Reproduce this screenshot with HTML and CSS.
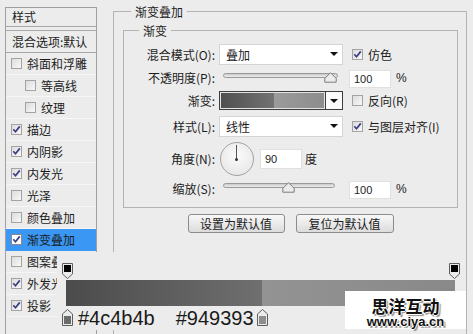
FILE: index.html
```html
<!DOCTYPE html>
<html lang="zh-CN">
<head>
<meta charset="utf-8">
<title>渐变叠加</title>
<link rel="stylesheet" href="styles.css">
</head>
<body>
<div class="dialog">
  <div class="style-list">
    <div class="list-head">样式</div>
    <div class="list-blend">混合选项:默认</div>
    <div class="item"><span class="cb"></span><span class="txt">斜面和浮雕</span></div>
    <div class="item sub"><span class="cb"></span><span class="txt">等高线</span></div>
    <div class="item sub"><span class="cb"></span><span class="txt">纹理</span></div>
    <div class="item"><span class="cb"><svg viewBox="0 0 11 11"><polyline points="2.3,5.3 4.5,7.8 8.8,2.4"/></svg></span><span class="txt">描边</span></div>
    <div class="item"><span class="cb"><svg viewBox="0 0 11 11"><polyline points="2.3,5.3 4.5,7.8 8.8,2.4"/></svg></span><span class="txt">内阴影</span></div>
    <div class="item"><span class="cb"><svg viewBox="0 0 11 11"><polyline points="2.3,5.3 4.5,7.8 8.8,2.4"/></svg></span><span class="txt">内发光</span></div>
    <div class="item"><span class="cb"></span><span class="txt">光泽</span></div>
    <div class="item"><span class="cb"></span><span class="txt">颜色叠加</span></div>
    <div class="item selected"><span class="cb"><svg viewBox="0 0 11 11"><polyline points="2.3,5.3 4.5,7.8 8.8,2.4"/></svg></span><span class="txt">渐变叠加</span></div>
    <div class="item"><span class="cb"></span><span class="txt">图案叠加</span></div>
    <div class="item"><span class="cb"><svg viewBox="0 0 11 11"><polyline points="2.3,5.3 4.5,7.8 8.8,2.4"/></svg></span><span class="txt">外发光</span></div>
    <div class="item"><span class="cb"><svg viewBox="0 0 11 11"><polyline points="2.3,5.3 4.5,7.8 8.8,2.4"/></svg></span><span class="txt">投影</span></div>
  </div>

  <fieldset class="group outer">
    <legend>渐变叠加</legend>
    <fieldset class="group inner">
      <legend>渐变</legend>
      <div class="row r1">
        <span class="lbl">混合模式(O):</span>
        <div class="select"><span>叠加</span><span class="arrow"></span></div>
        <span class="check"><span class="cb"><svg viewBox="0 0 11 11"><polyline points="2.3,5.3 4.5,7.8 8.8,2.4"/></svg></span><span class="txt">仿色</span></span>
      </div>
      <div class="row r2">
        <span class="lbl">不透明度(P):</span>
        <div class="slider">
          <div class="track"></div>
          <svg class="thumb" style="left:105px" viewBox="0 0 13 11"><path d="M6.5 0.8 L12.2 6.3 V10.2 H0.8 V6.3 Z"/></svg>
        </div>
        <span class="num">100</span>
        <span class="unit">%</span>
      </div>
      <div class="row r3">
        <span class="lbl">渐变:</span>
        <div class="grad-pick"><span class="grad"></span><span class="grad-btn"><span class="arrow"></span></span></div>
        <span class="check"><span class="cb"></span><span class="txt">反向(R)</span></span>
      </div>
      <div class="row r4">
        <span class="lbl">样式(L):</span>
        <div class="select"><span>线性</span><span class="arrow"></span></div>
        <span class="check"><span class="cb"><svg viewBox="0 0 11 11"><polyline points="2.3,5.3 4.5,7.8 8.8,2.4"/></svg></span><span class="txt">与图层对齐(I)</span></span>
      </div>
      <div class="row r5">
        <span class="lbl">角度(N):</span>
        <div class="dial"><span class="hand"></span><span class="pin"></span></div>
        <span class="num angle">90</span>
        <span class="unit deg">度</span>
      </div>
      <div class="row r6">
        <span class="lbl">缩放(S):</span>
        <div class="slider">
          <div class="track short"></div>
          <svg class="thumb" style="left:63px" viewBox="0 0 13 11"><path d="M6.5 0.8 L12.2 6.3 V10.2 H0.8 V6.3 Z"/></svg>
        </div>
        <span class="num">100</span>
        <span class="unit">%</span>
      </div>
    </fieldset>
    <div class="buttons">
      <button class="btn b1">设置为默认值</button>
      <button class="btn b2">复位为默认值</button>
    </div>
  </fieldset>
</div>

<div class="overlay">
  <div class="top-stops">
    <svg class="stop-top s-left" viewBox="0 0 11 16"><path class="frame" d="M0.5 0.5 H10.5 V11 L5.5 15.5 L0.5 11 Z"/><rect x="2" y="2" width="7" height="7" fill="#000"/></svg>
    <svg class="stop-top s-right" viewBox="0 0 11 16"><path class="frame" d="M0.5 0.5 H10.5 V11 L5.5 15.5 L0.5 11 Z"/><rect x="2" y="2" width="7" height="7" fill="#000"/></svg>
  </div>
  <div class="bar"></div>
  <div class="bottom-row">
    <svg class="stop-bot" viewBox="0 0 11 17"><path class="frame" d="M5.5 0.5 L10.5 5 V16.5 H0.5 V5 Z"/><rect x="2" y="7" width="7" height="8" fill="#6b6b6b"/></svg>
    <span class="hex h1">#4c4b4b</span>
    <span class="hex h2">#949393</span>
    <svg class="stop-bot" viewBox="0 0 11 17"><path class="frame" d="M5.5 0.5 L10.5 5 V16.5 H0.5 V5 Z"/><rect x="2" y="7" width="7" height="8" fill="#8e8e8e"/></svg>
  </div>
</div>

<div class="watermark">
  <div class="wm-cn">思洋互动</div>
  <div class="wm-url">www.ciya.cn</div>
</div>
</body>
</html>
```

FILE: styles.css
```css
* { box-sizing: border-box; }
html, body { margin: 0; padding: 0; }
body {
  width: 473px;
  height: 334px;
  overflow: hidden;
  background: #ececec;
  font-family: "Noto Sans CJK SC", "Noto Sans", sans-serif;
  font-size: 12px;
  line-height: 17px;
  color: #1c1c1c;
  position: relative;
}

.dialog {
  display: flex;
  align-items: flex-start;
}

/* ---------- style list ---------- */
.style-list {
  margin: 7px 0 0 5px;
  width: 92px;
  height: 340px;
  border: 1px solid #9f9f9f;
  background: #ececec;
}
.list-head {
  height: 19px;
  padding-left: 6px;
  line-height: 17px;
  border-bottom: 1px solid #a8a8a8;
}
.list-blend {
  margin-top: 3px;
  height: 23px;
  padding-left: 6px;
  line-height: 21px;
  border-top: 1px solid #a8a8a8;
  border-bottom: 1px solid #a8a8a8;
}
.item {
  height: 22px;
  display: flex;
  align-items: center;
  padding-left: 5px;
  border-bottom: 1px solid #f6f6f6;
  white-space: nowrap;
}
.item.sub { padding-left: 19px; }
.item .txt { margin-left: 5px; }
.item.selected {
  background: #3a97f4;
  border-bottom-color: #3a97f4;
}
.item.selected .cb { background: #fff; border-color: #8a8a8a; }

.cb {
  display: inline-block;
  flex: none;
  width: 11px;
  height: 11px;
  border: 1px solid #a3a3a3;
  background: linear-gradient(135deg, #dcdcdc, #f8f8f8);
  position: relative;
}
.cb svg {
  position: absolute;
  left: -1px;
  top: -1px;
  width: 11px;
  height: 11px;
}
.cb polyline {
  fill: none;
  stroke: #3a3f84;
  stroke-width: 1.7;
}

/* ---------- group boxes ---------- */
.group {
  margin: 0;
  min-width: 0;
  border: 1px solid #b3b3b3;
}
.group > legend {
  padding: 0 4px;
  font-size: 12px;
  line-height: 17px;
}
.outer {
  margin: 3px 0 0 16px;
  width: 354px;
  height: 345px;
  padding: 2px 8px 0 9px;
}
.outer > legend { margin-left: 8px; }
.inner {
  width: 335px;
  padding: 4px 0 7px 0;
}
.inner > legend { margin-left: 15px; }

.row {
  display: flex;
  align-items: center;
}
.r1 { height: 22px; }
.r2 { height: 25px; }
.r3 { height: 21px; }
.r4 { height: 30px; }
.r5 { height: 35px; }
.r6 { height: 24px; }

.lbl {
  width: 91px;
  margin-right: 4px;
  text-align: right;
  white-space: nowrap;
}

.select {
  width: 124px;
  height: 21px;
  background: #fff;
  border: 1px solid #d4d4d4;
  display: flex;
  align-items: center;
  justify-content: space-between;
  padding: 0 4px 0 6px;
}
.arrow {
  width: 0;
  height: 0;
  border-left: 4px solid transparent;
  border-right: 4px solid transparent;
  border-top: 4px solid #111;
}

.check {
  display: flex;
  align-items: center;
  margin-left: 9px;
  white-space: nowrap;
}
.check .txt { margin-left: 5px; }

.slider {
  width: 124px;
  height: 14px;
  position: relative;
}
.track {
  margin: 2px 5px 0 4px;
  height: 5px;
  border: 1px solid #9a9a9a;
  border-radius: 3px;
  background: linear-gradient(#c9c9c9, #eeeeee);
}
.track.short { margin-right: 8px; }
.thumb {
  position: absolute;
  top: 1px;
  width: 13px;
  height: 11px;
}
.thumb path {
  fill: #ececec;
  stroke: #7c7c7c;
  stroke-width: 1;
}

.num {
  margin-left: 6px;
  width: 42px;
  height: 18px;
  background: #fff;
  border: 1px solid #e0e0e0;
  font-family: "Liberation Sans", Arial, sans-serif;
  font-size: 11px;
  line-height: 16px;
  padding-left: 4px;
}
.r2 .num, .r6 .num { margin-top: 3px; }
.unit {
  margin-left: 5px;
  font-family: "Liberation Sans", Arial, sans-serif;
  font-size: 12px;
}
.r2 .unit, .r6 .unit { margin-top: 2px; }

.grad-pick {
  width: 124px;
  height: 19px;
  border: 1px solid #3d3d3d;
  display: flex;
}
.grad {
  flex: 1;
  border: 1px solid #e4e4e4;
  background: linear-gradient(to right, #4f4f4f 0%, #727272 51%, #9b9b9b 51%, #8d8d8d 100%);
}
.grad-btn {
  width: 17px;
  border-left: 1px solid #3d3d3d;
  background: #fafafa;
  display: flex;
  align-items: center;
  justify-content: center;
}

.dial {
  margin-left: 1px;
  width: 34px;
  height: 34px;
  border-radius: 50%;
  border: 1px solid #a2a2a2;
  background: radial-gradient(circle at 50% 40%, #fbfbfb, #e2e2e2);
  position: relative;
}
.hand {
  position: absolute;
  left: 15px;
  top: 2px;
  width: 1px;
  height: 15px;
  background: #555;
}
.pin {
  position: absolute;
  left: 14px;
  top: 15px;
  width: 3px;
  height: 3px;
  border-radius: 50%;
  background: #333;
}
.angle {
  height: 20px;
  line-height: 18px;
}
.deg {
  margin-left: 3px;
  font-family: "Noto Sans CJK SC", sans-serif;
}

.buttons {
  margin-top: 6px;
  display: flex;
  justify-content: center;
  gap: 11px;
}
.btn {
  height: 19px;
  padding: 0;
  border: 1px solid #8c8c8c;
  border-radius: 3px;
  background: linear-gradient(#f8f8f8, #dcdcdc);
  font-family: "Noto Sans CJK SC", sans-serif;
  font-size: 12px;
  line-height: 17px;
  color: #1c1c1c;
}
.b1 { width: 97px; }
.b2 { width: 98px; }

/* ---------- gradient editor overlay ---------- */
.overlay {
  position: absolute;
  left: 57px;
  top: 252px;
  width: 408px;
  height: 78px;
  background: #ececec;
}
.top-stops {
  position: relative;
  height: 28px;
}
.stop-top {
  position: absolute;
  top: 11px;
  width: 11px;
  height: 16px;
}
.s-left { left: 5px; }
.s-right { left: 392px; }
.frame {
  fill: #ebebeb;
  stroke: #5e5e5e;
  stroke-width: 1;
}
.bar {
  margin-left: 9px;
  width: 389px;
  height: 26px;
  background: linear-gradient(to right, #4c4b4b 0%, #6f6f6f 50.4%, #949393 50.4%, #898989 100%);
}
.bottom-row {
  display: flex;
  align-items: flex-start;
  margin-top: 3px;
  padding-left: 5px;
}
.stop-bot {
  width: 11px;
  height: 17px;
  flex: none;
}
.hex {
  font-family: "Liberation Sans", Arial, sans-serif;
  font-size: 20px;
  line-height: 18px;
  color: #1a1a1a;
}
.h1 { margin-left: 5px; }
.h2 { margin-left: 21px; margin-right: 3px; }

.watermark {
  position: absolute;
  left: 345px;
  top: 291px;
  width: 121px;
  height: 38px;
  background: #fff;
  text-align: center;
  font-weight: bold;
  color: #111;
  text-shadow: 1px 0 0 #fff, -1px 0 0 #fff, 0 1px 0 #fff, 0 -1px 0 #fff, 1px 1px 1px #777, 2px 2px 1px #999;
}
.wm-cn {
  font-family: "Noto Sans CJK SC", sans-serif;
  font-size: 17px;
  line-height: 17px;
  margin-top: 6px;
}
.wm-url {
  margin-top: 2px;
  font-family: "Liberation Sans", Arial, sans-serif;
  font-size: 13px;
  line-height: 12px;
}
```
